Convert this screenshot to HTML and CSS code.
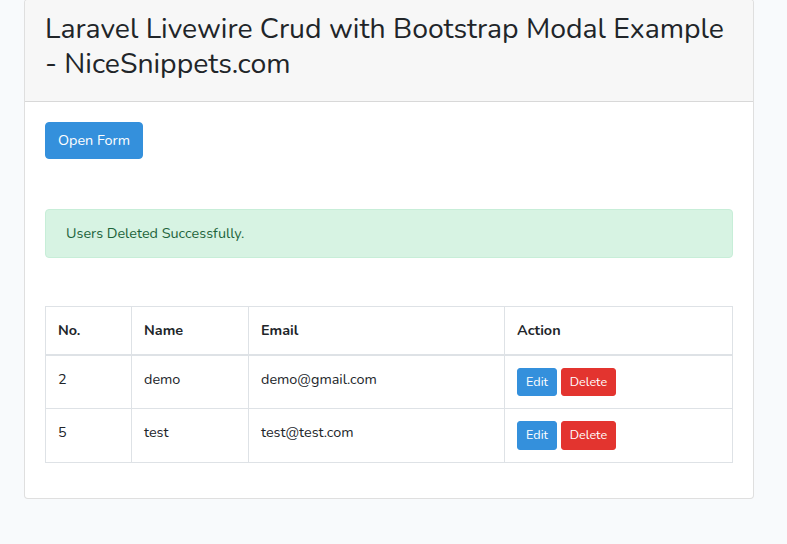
FILE: index.html
```html
<!DOCTYPE html>
<html>
<head>
<meta charset="utf-8">
<link rel="stylesheet" href="styles.css">
</head>
<body>
<div class="card">
  <div class="card-header">
    <h2 class="title">Laravel Livewire Crud with Bootstrap Modal Example - NiceSnippets.com</h2>
  </div>
  <div class="card-body">
    <button class="btn btn-primary">Open Form</button>
    <div class="alert">Users Deleted Successfully.</div>
    <table class="table">
      <thead>
        <tr><th class="c1">No.</th><th class="c2">Name</th><th class="c3">Email</th><th class="c4">Action</th></tr>
      </thead>
      <tbody>
        <tr><td>2</td><td>demo</td><td>demo@gmail.com</td><td><button class="btn btn-sm btn-primary">Edit</button> <button class="btn btn-sm btn-danger">Delete</button></td></tr>
        <tr><td>5</td><td>test</td><td>test@test.com</td><td><button class="btn btn-sm btn-primary">Edit</button> <button class="btn btn-sm btn-danger">Delete</button></td></tr>
      </tbody>
    </table>
  </div>
</div>
</body>
</html>
```
FILE: styles.css
```css
html, body { margin: 0; padding: 0; }
body {
  background: #f8fafc;
  font-family: "Nunito", "Lato", "Noto Sans", sans-serif;
  font-size: 14.4px;
  line-height: 1.6;
  color: #212529;
}
.card {
  width: 730px;
  box-sizing: border-box;
  margin: -1px 0 0 24px;
  background: #fff;
  border: 1px solid rgba(0,0,0,.125);
  border-radius: 4px;
}
.card-header {
  background: #f7f7f7;
  padding: 12px 20px;
  border-bottom: 1px solid rgba(0,0,0,.125);
  border-radius: 3px 3px 0 0;
}
.title {
  margin: 0 0 8px 0;
  font-size: 28.4px;
  font-weight: 400;
  line-height: 34.5px;
  color: #212529;
}
.card-body { padding: 20px; }
.btn {
  display: inline-block;
  font-family: inherit;
  font-size: 14.4px;
  line-height: 1.6;
  padding: 6px 12px;
  border: 1px solid transparent;
  border-radius: 4px;
  color: #fff;
  cursor: pointer;
  vertical-align: middle;
}
.btn-primary { background: #3490dc; border-color: #3490dc; }
.btn-danger { background: #e3342f; border-color: #e3342f; }
.btn-sm {
  font-size: 12.6px;
  line-height: 1.5;
  padding: 4px 8px;
  border-radius: 3px;
}
.alert {
  margin-top: 50px;
  padding: 12px 20px;
  background: #d7f3e3;
  border: 1px solid #c7eed8;
  color: #1d643b;
  border-radius: 4px;
}
.table {
  margin-top: 48px;
  margin-bottom: 15px;
  width: 100%;
  border-collapse: collapse;
}
.table th, .table td {
  border: 1px solid #dee2e6;
  padding: 12px;
  text-align: left;
  vertical-align: top;
  line-height: 22.5px;
}
.table tbody tr:last-child td { line-height: 22px; }
.table th { font-weight: 700; }
.table thead th { border-bottom-width: 2px; }
.c1 { width: 61px; }
.c2 { width: 92px; }
.c3 { width: 231px; }
```
